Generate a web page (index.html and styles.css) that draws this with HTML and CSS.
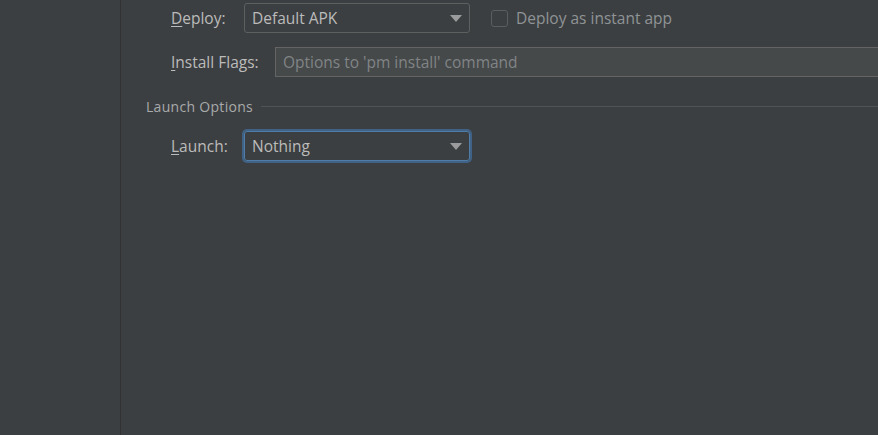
FILE: index.html
```html
<!DOCTYPE html>
<html>
<head>
<meta charset="utf-8">
<link rel="stylesheet" href="styles.css">
</head>
<body>
<div class="app">
  <aside class="sidebar"></aside>
  <main class="content">
    <div class="row row-deploy">
      <label class="label"><u>D</u>eploy:</label>
      <div class="combo">
        <span class="combo-text">Default APK</span>
        <span class="arrow"></span>
      </div>
      <div class="check">
        <span class="box"></span>
        <span class="check-label">Deploy as instant app</span>
      </div>
    </div>
    <div class="row row-flags">
      <label class="label"><u>I</u>nstall Flags:</label>
      <div class="field">Options to 'pm install' command</div>
    </div>
    <div class="group-title">
      <span class="group-text">Launch Options</span>
      <span class="group-line"></span>
    </div>
    <div class="row row-launch">
      <label class="label"><u>L</u>aunch:</label>
      <div class="combo focused">
        <span class="combo-text">Nothing</span>
        <span class="arrow"></span>
      </div>
    </div>
  </main>
</div>
</body>
</html>
```
FILE: styles.css
```css
html, body {
  margin: 0;
  padding: 0;
  height: 100%;
  background: #3c3f41;
  overflow: hidden;
}
.app {
  display: flex;
  height: 100%;
  font-family: "Open Sans", "Noto Sans", sans-serif;
  font-size: 15.5px;
  color: #bbbbbb;
}
.sidebar {
  width: 120px;
  flex: none;
  border-right: 1px solid #303234;
}
.content {
  flex: 1;
  display: flex;
  flex-direction: column;
  padding-top: 3px;
  min-width: 0;
}
.row {
  display: flex;
  align-items: center;
  height: 30px;
  padding-left: 50px;
}
.label {
  white-space: nowrap;
}
.label u {
  text-decoration-thickness: 1px;
  text-underline-offset: 2px;
}
.row-deploy .label { width: 73px; }
.row-launch .label { width: 73px; }
.row-flags .label { width: 104px; }
.row-flags { margin-top: 14px; }
.combo {
  box-sizing: border-box;
  width: 226px;
  height: 30px;
  border: 1px solid #5e6060;
  border-radius: 3px;
  display: flex;
  align-items: center;
  padding-left: 7px;
  padding-right: 7px;
  position: relative;
}
.combo-text {
  flex: 1;
  color: #bbbbbb;
}
.arrow {
  width: 0;
  height: 0;
  border-left: 6px solid transparent;
  border-right: 6px solid transparent;
  border-top: 7px solid #9a9b9c;
}
.combo.focused {
  border-color: #4f7ca8;
  box-shadow: 0 0 0 2px #3f6286;
}
.check {
  display: flex;
  align-items: center;
  margin-left: 21px;
}
.box {
  box-sizing: border-box;
  width: 17px;
  height: 17px;
  border: 1px solid #5b5d5f;
  border-radius: 3px;
  margin-right: 8px;
}
.check-label {
  color: #8f9396;
  white-space: nowrap;
}
.field {
  flex: 1;
  box-sizing: border-box;
  height: 30px;
  background: #45494a;
  border: 1px solid #646464;
  border-right: none;
  color: #818486;
  display: flex;
  align-items: center;
  padding-left: 7px;
  white-space: nowrap;
}
.group-title {
  display: flex;
  align-items: center;
  height: 24px;
  margin-top: 17px;
  padding-left: 25px;
}
.group-text {
  font-size: 14px;
  color: #a8aaab;
  letter-spacing: 0.3px;
  white-space: nowrap;
}
.group-line {
  flex: 1;
  height: 1px;
  background: #515355;
  margin-left: 8px;
}
.row-launch { margin-top: 13px; }
```
